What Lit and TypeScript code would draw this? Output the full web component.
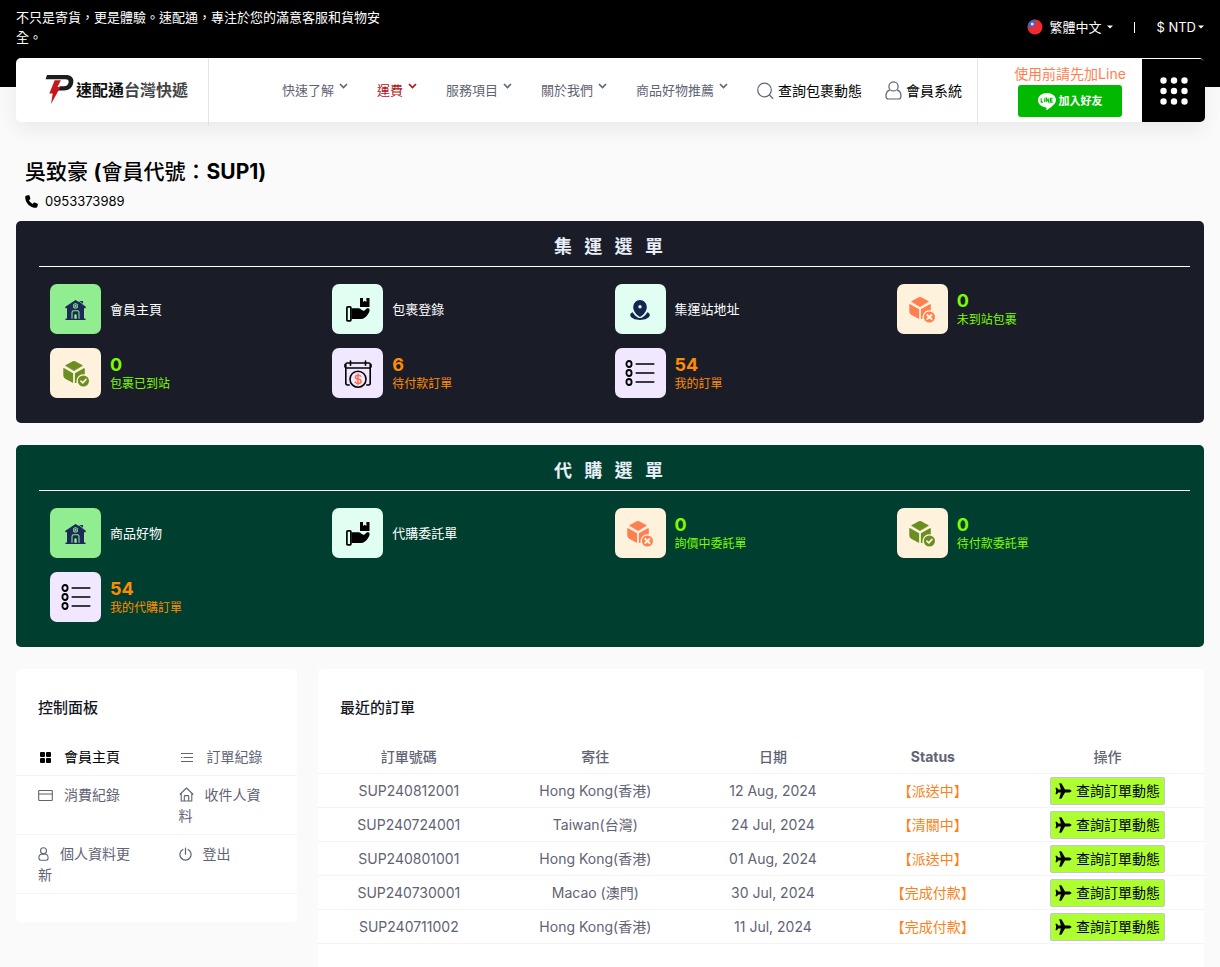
import { LitElement, html, css, svg, TemplateResult } from "lit";
import { customElement, property } from "lit/decorators.js";

type Tile = { icon: string; label: string; count?: number; tone?: "lime" | "orange" };

const glyphs: Record<string, { w: number; h: number; body: TemplateResult }> = {
  house: {
    w: 21, h: 20,
    body: svg`<path fill="#1b2a56" fill-rule="evenodd" d="M10.5 0 14 1.9V.9h4v3.7l3 2.4-.8 1.4-1.2-.5V18.400h1.500V20H.5v-1.600H2V7.900l-1.200.5L0 7ZM10.500 3.300a2.600 2.600 0 1 0 0 5.200 2.600 2.600 0 0 0 0-5.200M6.500 18.800h8v-6.300q0-2.200-2-2.200h-4q-2 0-2 2.200Z"/><circle cx="10.500" cy="5.900" r="1.500" fill="#90ee90" stroke="#1b2a56" stroke-width=".8"/><path fill="#1b2a56" d="M7.500 19.500v-6.800q0-1.400 1.300-1.400h3.400q1.300 0 1.300 1.400v6.800h-1.800v-4.300q0-1-1.200-1t-1.200 1v4.300Z"/><path stroke="#90ee90" stroke-width=".9" d="m13.500.5 5 4.200" fill="none"/>`,
  },
  hand: {
    w: 24, h: 24,
    body: svg`<rect x=".9" y="8.900" width="4" height="14" rx=".8" fill="none" stroke="#000" stroke-width="1.700"/><path d="M5.500 10.300h7.300c1.200 0 1.600.9 2.700 1.500l2.400 1.300 2.800-2.500c1.200-.8 3-.1 2.900 1.500-.1 3.500-4.400 8.900-8.200 8.900H5.500ZM14 0h3v4l1.700-1.200L20.400 4V0h3.100v9H14Z"/>`,
  },
  pin: {
    w: 20, h: 20,
    body: svg`<path fill="#14264f" fill-rule="evenodd" d="M10 0a6.800 6.800 0 0 1 6.800 6.700c0 4.600-3.500 8.300-5.900 9.700q-.9.500-1.800 0C6.700 15 3.200 11.300 3.200 6.700A6.800 6.800 0 0 1 10 0m0 5.100a1.700 1.700 0 1 0 0 3.400 1.700 1.700 0 0 0 0-3.400"/><path fill="#14264f" d="M2.700 12.200c1.300 2.500 3.400 4.300 5.600 5.500q1.700.8 3.400 0c2.200-1.200 4.300-3 5.600-5.500 1.500.5 2.500 1.500 2.500 2.900 0 3-4.800 4.900-9.800 4.900S.2 18.100.2 15.100c0-1.400 1-2.400 2.500-2.900"/>`,
  },
  boxX: {
    w: 26, h: 26,
    body: svg`<g fill="#ff7f50"><path d="m11 0 8.400 4.600-8.400 5-8.400-5Z" stroke="#ff7f50" stroke-width=".8" stroke-linejoin="round"/><path d="m.8 7 9.300 5.200v9.700l-7.500-4Q.3 16.700.3 14.500V7.300ZM11.900 12.200 21.300 7l.5.700v5.600q-6.800-.5-8.300 5.900-.1 1.500.2 2.500l-1.800.4Z"/><path fill-rule="evenodd" d="M20.400 14.400a5.600 5.600 0 1 0 0 11.200 5.600 5.600 0 0 0 0-11.200m-2.100 2.300 2.100 1.800 2.100-1.800 1.200 1.200-1.700 2.100 1.700 2.100-1.200 1.200-2.100-1.800-2.100 1.800-1.200-1.200 1.700-2.100-1.700-2.100Z"/></g>`,
  },
  boxCheck: {
    w: 26, h: 26,
    body: svg`<g fill="#6b8e23"><path d="m11 0 8.400 4.600-8.400 5-8.400-5Z" stroke="#6b8e23" stroke-width=".8" stroke-linejoin="round"/><path d="m.8 7 9.300 5.200v9.700l-7.500-4Q.3 16.700.3 14.500V7.300ZM11.900 12.200 21.300 7l.5.700v5.600q-6.800-.5-8.300 5.900-.1 1.500.2 2.500l-1.800.4Z"/><circle cx="20.400" cy="20" r="5.600"/><path d="m17.900 20.100 1.900 1.800 3.200-3.500" fill="none" stroke="#fff2dc" stroke-width="1.600" stroke-linecap="round"/></g>`,
  },
  calendar: {
    w: 28, h: 28,
    body: svg`<g fill="none" stroke="#000" stroke-width="1.600" stroke-linecap="round"><path d="M5.200 25H3.500Q1.800 25 1.800 23V4.300q0-1.300 1.300-1.300h21.800q1.300 0 1.300 1.300V23q0 2-1.700 2h-1.700M1.800 8h24.400M6.500 1v4.200M21.500 1v4.200M1 4.500V7M27 4.500V7"/><circle cx="14" cy="19.200" r="8"/></g><path d="M17 16.800q-.6-1.600-2.900-1.600-2.700 0-2.700 2 0 1.400 2.700 1.900 3 .5 3 2.300 0 2-3 2-2.600 0-3.100-1.900M14 13.600v11.600" fill="none" stroke="#ff6f47" stroke-width="1.500"/>`,
  },
  list: {
    w: 30, h: 28,
    body: svg`<g fill="none" stroke="#000" stroke-width="1.800"><ellipse cx="4" cy="4" rx="2.600" ry="3"/><ellipse cx="4" cy="13" rx="2.600" ry="3"/><ellipse cx="4" cy="22" rx="2.600" ry="3"/><path stroke-width="1.600" stroke-linecap="round" d="M11.200 4h17.600M11.200 13h17.600M11.200 22h17.600"/></g>`,
  },
  grid: {
    w: 15, h: 13,
    body: svg`<g fill="#000"><rect x="2" y="1" width="5" height="5" rx="1"/><rect x="8" y="1" width="5" height="5" rx="1"/><rect x="2" y="7" width="5" height="5" rx="1"/><rect x="8" y="7" width="5" height="5" rx="1"/></g>`,
  },
  lines: {
    w: 17, h: 13,
    body: svg`<path d="M2 2.500h12M2 6.500h1.200M4.500 6.500H14M2 10.500h12" fill="none" stroke="#5f6374" stroke-width="1.200"/>`,
  },
  card: {
    w: 15, h: 13,
    body: svg`<path d="M1.500 1.500h12q.8 0 .8.800v8.400q0 .8-.8.800h-12q-.8 0-.8-.8V2.300q0-.8.800-.8ZM.7 5h13.600" fill="none" stroke="#5f6374" stroke-width="1.100"/>`,
  },
  home: {
    w: 15, h: 15,
    body: svg`<path d="M.8 7.500 7.500 1l6.700 6.500M2.200 6.300V14h10.600V6.300M5.300 14V9.200q0-.6.600-.6h3.200q.6 0 .6.600V14" fill="none" stroke="#5f6374" stroke-width="1.100" stroke-linejoin="round"/>`,
  },
  person: {
    w: 11, h: 14,
    body: svg`<circle cx="5.500" cy="3.800" r="3" fill="none" stroke="#5f6374" stroke-width="1.100"/><path d="M2.900 7.300h5.200q2 .6 2 3.200 0 2.700-1.700 2.700H2.600Q.9 13.200.9 10.500q0-2.600 2-3.200Z" fill="none" stroke="#5f6374" stroke-width="1.100"/>`,
  },
  power: {
    w: 13, h: 14,
    body: svg`<path d="M6.500 1v6.200M3.900 2.500a5.600 5.600 0 1 0 5.200 0" fill="none" stroke="#5f6374" stroke-width="1.200" stroke-linecap="round"/>`,
  },
  search: {
    w: 17, h: 17,
    body: svg`<circle cx="7.500" cy="8" r="6.800" fill="none" stroke="#5f6374" stroke-width="1.200"/><path d="m12.400 13 3.400 3.400" stroke="#5f6374" stroke-width="1.300" stroke-linecap="round"/>`,
  },
  user: {
    w: 17, h: 19,
    body: svg`<g fill="none" stroke="#5f6374" stroke-width="1.200"><circle cx="8.500" cy="5.400" r="4.600"/><path d="M4.800 8.900C2.500 9.900 1 12.200 1 14.900q0 3.100 2.700 3.100h9.600q2.700 0 2.700-3.100c0-2.700-1.500-5-3.800-6"/></g>`,
  },
  chevron: {
    w: 9, h: 6,
    body: svg`<path d="m1 1 3.500 3.500L8 1" fill="none" stroke="currentColor" stroke-width="1.600"/>`,
  },
  caret: { w: 6, h: 4, body: svg`<path d="M0 .5h6L3 3.500Z" fill="#fff"/>` },
  flag: {
    w: 16, h: 16,
    body: svg`<circle cx="8" cy="8" r="7.500" fill="#ef2b2d"/><path d="M.5 8A7.500 7.500 0 0 1 8 .5V8Z" fill="#3f63c4"/><circle cx="5.200" cy="4.900" r="1.500" fill="#dfe6fa"/>`,
  },
  phone: {
    w: 13, h: 13,
    body: svg`<path d="M2.900.2q1.200-.4 1.600.5l.8 2.400q.3.800-.4 1.400l-1 .8q1.100 2.400 3.700 3.700l.8-1q.6-.7 1.400-.4l2.400.9q.9.400.6 1.500l-.6 2q-.3.800-1.100.8C5.100 12.800.2 7.900.2 1.900q0-.9.8-1.100Z"/>`,
  },
  apps: {
    w: 28, h: 28,
    body: svg`<g fill="#fff">${[3.500, 14, 24.5].map((y) => [3.500, 14, 24.5].map((x) => svg`<circle cx=${x} cy=${y} r="3.200"/>`))}</g>`,
  },
  plane: {
    w: 17, h: 16,
    body: svg`<path d="M13.500 6.500c1.200 0 3 .7 3 1.500s-1.800 1.500-3 1.500H10l-3.300 5.800q-.2.400-.7.400H4.200l1.700-6.200H3.200L2 11.200H.5L1.200 8 .5 4.800H2l1.200 1.700h2.700L4.200.3H6q.5 0 .7.400L10 6.500Z"/>`,
  },
  bubble: {
    w: 18, h: 17,
    body: svg`<path d="M9 0c5 0 9 3.100 9 7.200 0 3.600-5.200 7.400-9.100 9.700-.6.300-.7-.1-.6-.7l.2-1.800C3.700 14.100 0 11.200 0 7.200 0 3.100 4 0 9 0" fill="#fff"/><path d="M3.200 5.200v3.900h2M6.700 5.200v3.900M8.300 9.100V5.200l2.500 3.900V5.200M14.700 5.200h-2.200v3.900h2.200M12.500 7.100h2" stroke="#00b900" stroke-width="1.100" fill="none"/>`,
  },
  mark: {
    w: 30, h: 30,
    body: svg`<path d="M2 0h18.500C26 0 29 2.500 28.300 7.500 27.500 12.800 24 15.500 19 15.500h-6.500l2.200-4.300H19c2.600 0 4.200-1.200 4.600-3.600.4-2.300-.7-3.400-3.100-3.400H.6Z" fill="#1d1d1f"/><path d="M9.700 5.300h6.200L12.500 12h3L6 29l1.700-10.500H4.300Z" fill="#c4161c"/>`,
  },
};

const icon = (name: string) => {
  const g = glyphs[name];
  return html`<svg class="icon" width=${g.w} height=${g.h} viewBox="0 0 ${g.w} ${g.h}" aria-hidden="true">${g.body}</svg>`;
};

const shared = css`
  * { box-sizing: border-box; }
  a { color: inherit; text-decoration: none; }
  button { font: inherit; color: inherit; border: 0; background: none; padding: 0; cursor: pointer; }
  h1, h2, p { margin: 0; }
  .icon { flex: none; }
`;

@customElement("menu-panel")
export class MenuPanel extends LitElement {
  @property() heading = "";
  @property({ attribute: false }) tiles: Tile[] = [];

  static styles = [shared, css`
    :host { display: block; border-radius: 5px; padding: 12px 0 25px; }
    .title {
      margin: 0 14px 0 23px; padding: 0 8px 6px 0; border-bottom: 1px solid #fff;
      color: #e8eef8; font-size: 18px; line-height: 27px; font-weight: 700;
      letter-spacing: 4px; text-align: center;
    }
    .tiles {
      display: grid; grid-template-columns: repeat(4, 1fr); row-gap: 14px;
      padding: 17px 25px 0 34px;
    }
    .tile { display: flex; align-items: center; gap: 9px; color: #fff; font-size: 13px; line-height: 20px; }
    .badge { width: 51px; height: 50px; border-radius: 7px; display: grid; place-items: center; padding-top: 2px; }
    .house { background: #90ee90; }
    .hand, .pin { background: #e0fff2; }
    .boxX, .boxCheck { background: #fff2dc; }
    .calendar, .list { background: #f1e8ff; }
    .stat { display: grid; padding-top: 2px; font-size: 12px; line-height: 18px; }
    .count { font-size: 18px; line-height: 20px; font-weight: 700; }
    .lime { color: #7cfc00; }
    .orange { color: #ff8c00; }
  `];

  render() {
    return html`
      <h2 class="title">${this.heading}</h2>
      <div class="tiles">
        ${this.tiles.map((t) => html`
          <a class="tile" href="#">
            <span class="badge ${t.icon}">${icon(t.icon)}</span>
            ${t.tone
              ? html`<span class="stat ${t.tone}"><span class="count">${t.count}</span><span>${t.label}</span></span>`
              : html`<span>${t.label}</span>`}
          </a>`)}
      </div>`;
  }
}

@customElement("app-root")
export class AppRoot extends LitElement {
  static styles = [shared, css`
    :host {
      display: flex; flex-direction: column; min-height: 100vh; background: #fafafa; color: #000;
      font-family: Inter, "Noto Sans CJK TC", sans-serif; font-size: 14px; line-height: 21px;
    }
    .topbar {
      background: #000; color: #fff; padding: 7px 16px 40px; display: grid;
      grid-template-columns: 1fr 2fr; font-size: 13px; line-height: 20px;
    }
    .slogan { padding-right: 16px; }
    .tools { display: flex; justify-content: flex-end; align-items: center; gap: 21px; }
    .tool { display: flex; align-items: center; gap: 6px; }
    .currency { gap: 2px; }
    .bar { width: 1px; height: 11px; background: #fff; }
    .header {
      margin: -29px 16px 0; height: 64px; background: #fff; border-radius: 5px; display: flex;
      box-shadow: 0 8px 20px rgba(30, 35, 60, 0.07);
    }
    .brand { width: 192px; display: flex; align-items: center; gap: 1px; padding-left: 29px; font-size: 16px; font-weight: 700; color: #444; }
    .brand-dark { color: #111; }
    .nav {
      flex: 1; display: flex; align-items: center; justify-content: flex-end; gap: 29px;
      padding-right: 15px; margin-bottom: -4px; padding-bottom: 4px;
      border: solid #e3e4e8; border-width: 0 1px; font-size: 13px; color: #5f6374;
    }
    .menu { display: flex; align-items: center; gap: 5px; }
    .menu .icon { margin-bottom: 8px; }
    .current { color: #b01218; }
    .actions { display: flex; gap: 23px; color: #000; font-size: 14px; }
    .action { display: flex; align-items: center; gap: 4px; }
    .line { width: 164px; padding: 5px 0 0 20px; display: flex; flex-direction: column; align-items: center; line-height: 22px; color: #ff7f50; }
    .add {
      width: 104px; height: 32px; border-radius: 3px; background: #00b900; color: #fff; font-size: 11px; font-weight: 700;
      display: flex; align-items: center; justify-content: center; gap: 3px;
    }
    .apps { width: 63px; background: #000; border-radius: 0 5px 5px 0; display: grid; place-items: center; margin: 1px -1px 0 0; }
    .member { padding: 34px 25px 9px; }
    .name { font-size: 21px; line-height: 32px; font-weight: 500; }
    .name b { font-weight: 700; }
    .phone { display: flex; align-items: center; gap: 7px; font-size: 13px; padding-top: 3px; }
    .forwarding, .purchasing { margin: 0 16px 22px; }
    .forwarding { background: #1a1d28; }
    .purchasing { background: #003f2f; }
    .lower { flex: 1; display: grid; grid-template-columns: 281fr 886fr; gap: 21px; margin: 0 16px; color: #5f6374; }
    .side { background: #fff; border-radius: 5px; align-self: start; padding-bottom: 28px; }
    .orders { background: #fff; border-radius: 5px 5px 0 0; padding-bottom: 20px; }
    .card-title { padding: 28px 22px 0; font-size: 15px; line-height: 22px; font-weight: 500; color: #16181f; }
    .links { display: grid; grid-template-columns: 1fr 1fr; padding-top: 19px; }
    .link { padding: 8px 24px 8px 22px; border-bottom: 1px solid #f3f3f5; }
    .link .icon { margin-right: 11px; vertical-align: -2px; }
    .here { color: #000; }
    .table { width: 100%; table-layout: fixed; border-collapse: separate; border-spacing: 0; margin-top: 19px; text-align: center; }
    .table th { height: 36px; padding: 2px 0 0; font-weight: 500; border-bottom: 1px solid #f3f3f5; }
    .table .strong { font-weight: 700; }
    .table td { height: 34px; padding: 0; border-bottom: 1px solid #f3f3f5; }
    .c1 { width: 20.5%; } .c2 { width: 21.6%; } .c3 { width: 18.5%; } .c4 { width: 17.6%; }
    .table .status { color: #ff7f1a; }
    .track {
      display: inline-flex; align-items: center; gap: 4px; height: 28px; padding: 0 4px; vertical-align: middle;
      background: #adff2f; border: 1px solid #c3c6cc; border-radius: 2px; color: #000;
    }
  `];

  private forwarding: Tile[] = [
    { icon: "house", label: "會員主頁" },
    { icon: "hand", label: "包裹登錄" },
    { icon: "pin", label: "集運站地址" },
    { icon: "boxX", label: "未到站包裹", count: 0, tone: "lime" },
    { icon: "boxCheck", label: "包裹已到站", count: 0, tone: "lime" },
    { icon: "calendar", label: "待付款訂單", count: 6, tone: "orange" },
    { icon: "list", label: "我的訂單", count: 54, tone: "orange" },
  ];

  private purchasing: Tile[] = [
    { icon: "house", label: "商品好物" },
    { icon: "hand", label: "代購委託單" },
    { icon: "boxX", label: "詢價中委託單", count: 0, tone: "lime" },
    { icon: "boxCheck", label: "待付款委託單", count: 0, tone: "lime" },
    { icon: "list", label: "我的代購訂單", count: 54, tone: "orange" },
  ];

  private menus = ["快速了解", "運費", "服務項目", "關於我們", "商品好物推薦"];

  private links = [
    ["grid", "會員主頁"], ["lines", "訂單紀錄"], ["card", "消費紀錄"],
    ["home", "收件人資料"], ["person", "個人資料更新"], ["power", "登出"],
  ];

  private orders = [
    ["SUP240812001", "Hong Kong(香港)", "12 Aug, 2024", "【派送中】"],
    ["SUP240724001", "Taiwan(台灣)", "24 Jul, 2024", "【清關中】"],
    ["SUP240801001", "Hong Kong(香港)", "01 Aug, 2024", "【派送中】"],
    ["SUP240730001", "Macao (澳門)", "30 Jul, 2024", "【完成付款】"],
    ["SUP240711002", "Hong Kong(香港)", "11 Jul, 2024", "【完成付款】"],
  ];

  render() {
    return html`
      <div class="topbar">
        <p class="slogan">不只是寄貨，更是體驗。速配通，專注於您的滿意客服和貨物安全。</p>
        <div class="tools">
          <button class="tool">${icon("flag")}<span>繁體中文</span>${icon("caret")}</button>
          <span class="bar"></span>
          <button class="tool currency"><span>$ NTD</span>${icon("caret")}</button>
        </div>
      </div>

      <header class="header">
        <a class="brand" href="#">${icon("mark")}<span><span class="brand-dark">速配通</span>台灣快遞</span></a>
        <nav class="nav">
          ${this.menus.map((m) => html`<a class="menu ${m === "運費" ? "current" : ""}" href="#">${m}${icon("chevron")}</a>`)}
          <div class="actions">
            <a class="action" href="#">${icon("search")}查詢包裹動態</a>
            <a class="action" href="#">${icon("user")}會員系統</a>
          </div>
        </nav>
        <div class="line">
          <span>使用前請先加Line</span>
          <a class="add" href="#">${icon("bubble")}加入好友</a>
        </div>
        <button class="apps" aria-label="選單">${icon("apps")}</button>
      </header>

      <section class="member">
        <h1 class="name">吳致豪 <b>(</b>會員代號：<b>SUP1)</b></h1>
        <p class="phone">${icon("phone")}0953373989</p>
      </section>

      <menu-panel class="forwarding" heading="集 運 選 單" .tiles=${this.forwarding}></menu-panel>
      <menu-panel class="purchasing" heading="代 購 選 單" .tiles=${this.purchasing}></menu-panel>

      <div class="lower">
        <aside class="side">
          <h2 class="card-title">控制面板</h2>
          <nav class="links">
            ${this.links.map(([name, label], i) => html`<a class="link ${i === 0 ? "here" : ""}" href="#">${icon(name)}${label}</a>`)}
          </nav>
        </aside>
        <section class="orders">
          <h2 class="card-title">最近的訂單</h2>
          <table class="table">
            <thead>
              <tr>
                <th class="c1">訂單號碼</th><th class="c2">寄往</th><th class="c3">日期</th>
                <th class="c4 strong">Status</th><th>操作</th>
              </tr>
            </thead>
            <tbody>
              ${this.orders.map(([id, to, date, status]) => html`
                <tr>
                  <td>${id}</td><td>${to}</td><td>${date}</td><td class="status">${status}</td>
                  <td><button class="track">${icon("plane")}查詢訂單動態</button></td>
                </tr>`)}
            </tbody>
          </table>
        </section>
      </div>`;
  }
}
